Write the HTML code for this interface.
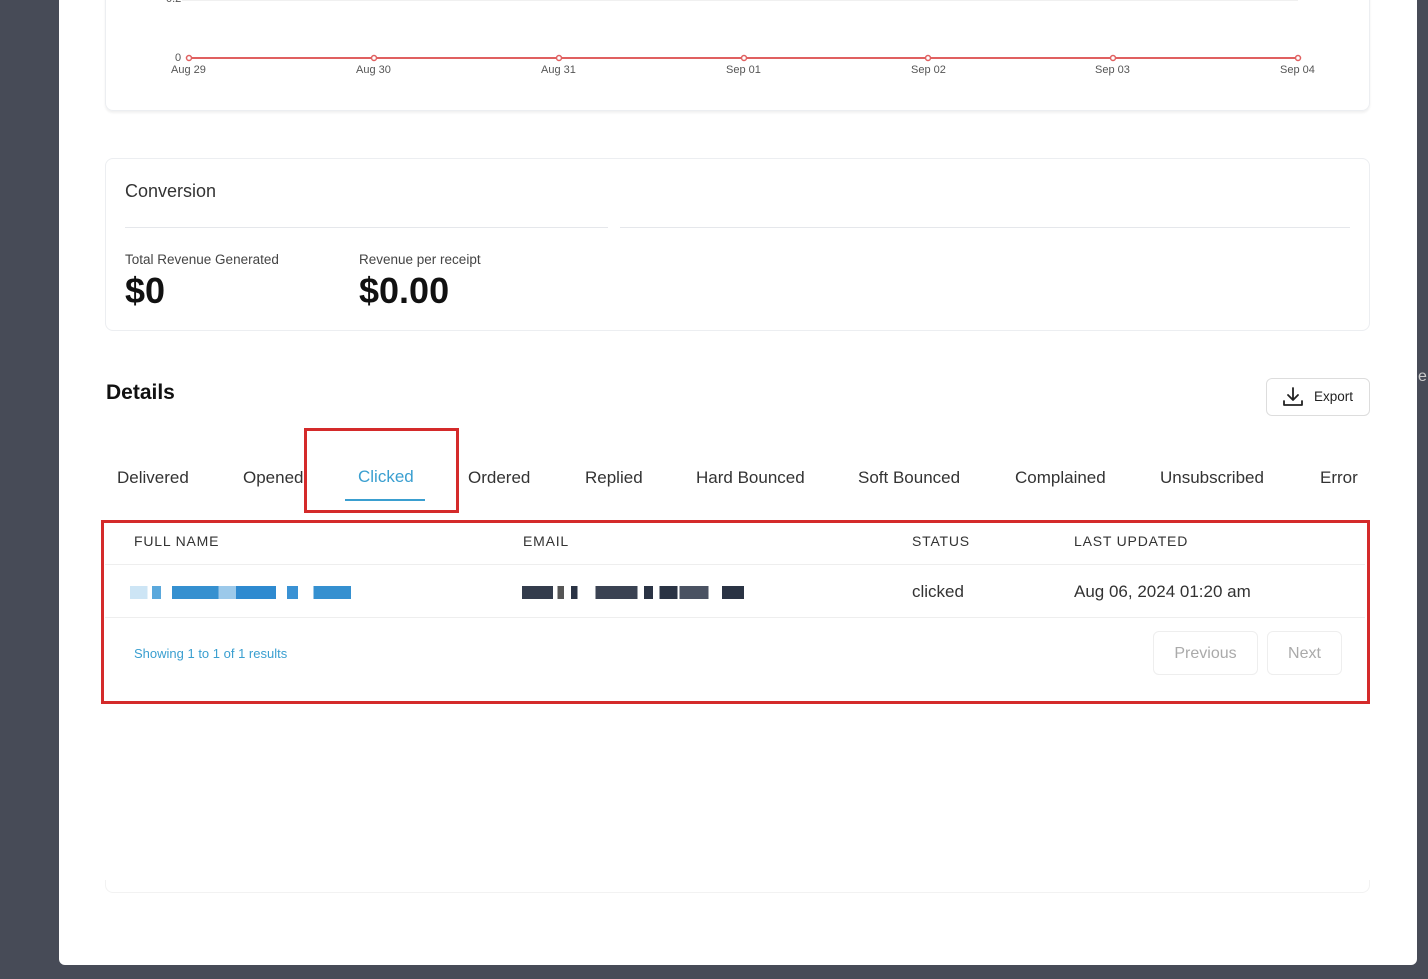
<!DOCTYPE html>
<html><head><meta charset="utf-8"><style>
*{margin:0;padding:0;box-sizing:border-box}
body{width:1428px;height:979px;background:#474b57;position:relative;overflow:hidden;font-family:"Liberation Sans",sans-serif;color:#1f2937}
.page{position:absolute;left:59px;top:0;width:1358px;height:965px;background:#fff;border-radius:0 0 6px 6px}
.abs{position:absolute}
.card{position:absolute;border:1px solid #eceef1;border-radius:8px}
.lbl{font-size:11px;color:#555}
.tab{position:absolute;top:468px;font-size:17px;color:#333}
.hd{position:absolute;top:533px;font-size:14px;letter-spacing:.8px;color:#333}
.px{position:absolute;height:13px}
</style></head><body>
<div class="page"></div>
<div class="card" style="left:105px;top:-20px;width:1265px;height:131px;box-shadow:0 2px 2px rgba(0,0,0,.06)"></div>
<div class="abs lbl" style="left:166px;top:-7px">0.2</div>
<div class="abs" style="left:182px;top:0;width:1116px;height:1px;background:#f0f0f0"></div>
<div class="abs lbl" style="left:175px;top:52px">0</div>
<div class="abs" style="left:189px;top:57px;width:1109px;height:2px;background:#e06060"></div>
<div class="abs lbl" style="left:171px;top:64px">Aug 29</div>
<div class="abs lbl" style="left:356px;top:64px">Aug 30</div>
<div class="abs lbl" style="left:541px;top:64px">Aug 31</div>
<div class="abs lbl" style="left:726px;top:64px">Sep 01</div>
<div class="abs lbl" style="left:911px;top:64px">Sep 02</div>
<div class="abs lbl" style="left:1095px;top:64px">Sep 03</div>
<div class="abs lbl" style="left:1280px;top:64px">Sep 04</div>
<svg class="abs" style="left:0;top:0" width="1428" height="70">
<g fill="#fff" stroke="#e06060" stroke-width="1.5">
<circle cx="189" cy="58" r="2.5"/><circle cx="374" cy="58" r="2.5"/><circle cx="559" cy="58" r="2.5"/><circle cx="744" cy="58" r="2.5"/><circle cx="928" cy="58" r="2.5"/><circle cx="1113" cy="58" r="2.5"/><circle cx="1298" cy="58" r="2.5"/></g></svg>
<div class="card" style="left:105px;top:158px;width:1265px;height:173px"></div>
<div class="abs" style="left:125px;top:181px;font-size:18px;color:#333">Conversion</div>
<div class="abs" style="left:125px;top:227px;width:483px;height:1px;background:#e5e7eb"></div>
<div class="abs" style="left:620px;top:227px;width:730px;height:1px;background:#e5e7eb"></div>
<div class="abs" style="left:125px;top:252px;font-size:13.5px;color:#444">Total Revenue Generated</div>
<div class="abs" style="left:359px;top:252px;font-size:13.5px;color:#444">Revenue per receipt</div>
<div class="abs" style="left:125px;top:270px;font-size:36px;font-weight:bold;color:#111">$0</div>
<div class="abs" style="left:359px;top:270px;font-size:36px;font-weight:bold;color:#111">$0.00</div>
<div class="abs" style="left:106px;top:381px;font-size:21px;font-weight:bold;color:#111">Details</div>
<div class="abs" style="left:1266px;top:378px;width:104px;height:38px;border:1px solid #ddd;border-radius:6px"></div>
<svg class="abs" style="left:1282px;top:386px" width="22" height="22" viewBox="0 0 22 22" fill="none" stroke="#222" stroke-width="1.8" stroke-linecap="round" stroke-linejoin="round"><path d="M11 2v12M6 9l5 5 5-5M2 15v4h18v-4"/></svg>
<div class="abs" style="left:1314px;top:389px;font-size:13.5px;color:#222">Export</div>
<div class="tab" style="left:117px">Delivered</div>
<div class="tab" style="left:243px">Opened</div>
<div class="tab" style="left:358px;top:467px;color:#3a9fd0">Clicked</div>
<div class="abs" style="left:345px;top:499px;width:80px;height:2px;background:#3a9fd0"></div>
<div class="tab" style="left:468px">Ordered</div>
<div class="tab" style="left:585px">Replied</div>
<div class="tab" style="left:696px">Hard Bounced</div>
<div class="tab" style="left:858px">Soft Bounced</div>
<div class="tab" style="left:1015px">Complained</div>
<div class="tab" style="left:1160px">Unsubscribed</div>
<div class="tab" style="left:1320px">Error</div>
<div class="abs" style="left:304px;top:428px;width:155px;height:85px;border:3px solid #d42a2a"></div>
<div class="hd" style="left:134px">FULL NAME</div>
<div class="hd" style="left:523px">EMAIL</div>
<div class="hd" style="left:912px">STATUS</div>
<div class="hd" style="left:1074px">LAST UPDATED</div>
<div class="abs" style="left:105px;top:564px;width:1260px;height:1px;background:#eee"></div>
<div class="abs" style="left:105px;top:617px;width:1260px;height:1px;background:#eee"></div>
<div class="px" style="left:130px;top:586px;width:221px;background:linear-gradient(90deg,#cde5f5 0 8%,#fff 8% 10%,#5aa8dc 10% 14%,#fff 14% 19%,#3590d0 19% 40%,#9cc9ea 40% 48%,#2e8ad0 48% 66%,#fff 66% 71%,#3a92d4 71% 76%,#fff 76% 83%,#3590d0 83% 100%)"></div>
<div class="px" style="left:522px;top:586px;width:222px;background:linear-gradient(90deg,#333c4c 0 14%,#fff 14% 16%,#555 16% 19%,#fff 19% 22%,#2a3344 22% 25%,#fff 25% 33%,#3a4252 33% 52%,#fff 52% 55%,#2a3344 55% 59%,#fff 59% 62%,#2a3344 62% 70%,#fff 70% 71%,#4a5262 71% 84%,#fff 84% 90%,#2a3344 90% 100%)"></div>
<div class="abs" style="left:912px;top:582px;font-size:17px;color:#333">clicked</div>
<div class="abs" style="left:1074px;top:582px;font-size:17px;color:#333">Aug 06, 2024 01:20 am</div>
<div class="abs" style="left:134px;top:646px;font-size:13px;color:#3a9fd0">Showing 1 to 1 of 1 results</div>
<div class="abs" style="left:1153px;top:631px;width:105px;height:44px;border:1px solid #eee;border-radius:6px;font-size:16px;color:#aaa;text-align:center;line-height:44px">Previous</div>
<div class="abs" style="left:1267px;top:631px;width:75px;height:44px;border:1px solid #eee;border-radius:6px;font-size:16px;color:#aaa;text-align:center;line-height:44px">Next</div>
<div class="abs" style="left:101px;top:520px;width:1269px;height:184px;border:3px solid #d42a2a"></div>
<div class="abs" style="left:105px;top:880px;width:1265px;height:13px;border:1px solid #f2f2f2;border-top:none;border-radius:0 0 8px 8px"></div>
<div class="abs" style="left:1418px;top:368px;font-size:16px;color:#ccc">e</div>
</body></html>
